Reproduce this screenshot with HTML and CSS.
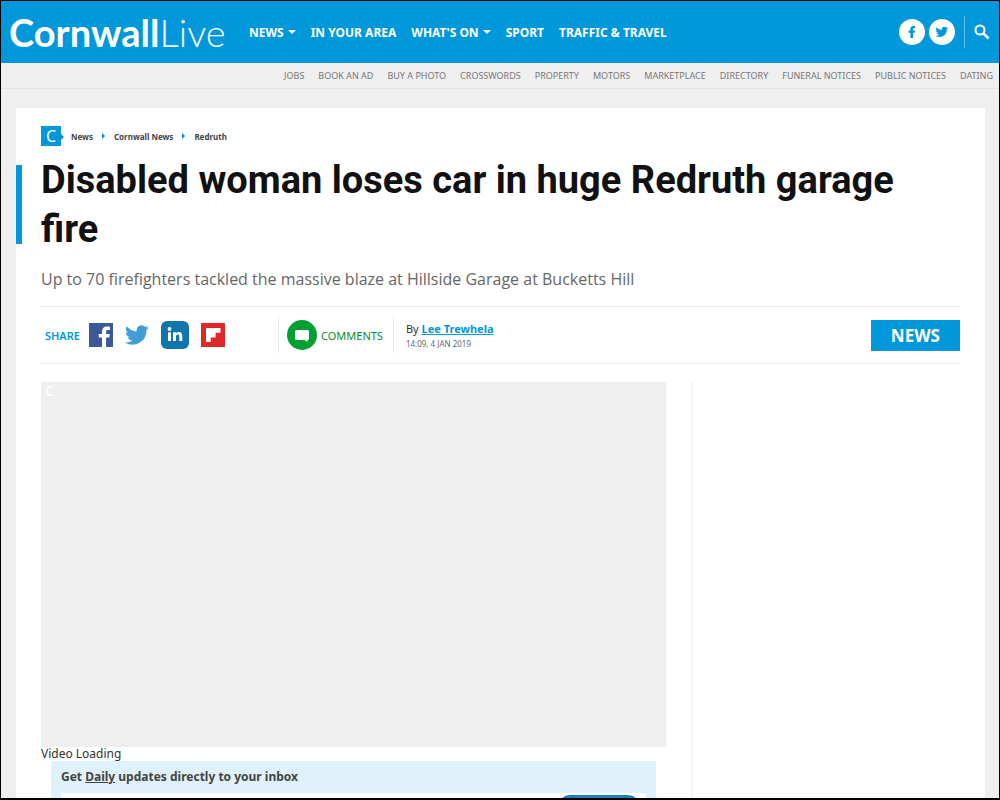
FILE: index.html
```html
<!DOCTYPE html>
<html lang="en">
<head>
<meta charset="utf-8">
<meta name="viewport" content="width=device-width, initial-scale=1">
<title>Disabled woman loses car in huge Redruth garage fire - Cornwall Live</title>
<link rel="stylesheet" href="styles.css">
</head>
<body>
<div class="frame">
  <header class="header">
    <a class="logo" href="#"><span class="logo-strong">Cornwall</span><span class="logo-light">Live</span></a>
    <nav class="main-nav" aria-label="Main">
      <a class="has-menu" href="#">NEWS</a>
      <a href="#">IN YOUR AREA</a>
      <a class="has-menu" href="#">WHAT'S ON</a>
      <a href="#">SPORT</a>
      <a href="#">TRAFFIC &amp; TRAVEL</a>
    </nav>
    <div class="header-tools">
      <a class="round" href="#" aria-label="Facebook"><svg width="26" height="26" viewBox="0 0 26 26"><circle cx="13" cy="13" r="13" fill="#fff"/><path d="M11.400 19v-5.200H9.500v-2.400h1.900V9.800C11.400 7.800 12.500 7 14.200 7h1.900v2.300h-1.200c-.7 0-.9.300-.9.900v1.200h2.100l-.3 2.400H14V19z" fill="#0098db"/></svg></a>
      <a class="round" href="#" aria-label="Twitter"><svg width="26" height="26" viewBox="0 0 26 26"><circle cx="13" cy="13" r="13" fill="#fff"/><g transform="translate(6.500 6.500) scale(.53)"><path d="M24 4.600a10 10 0 0 1-2.800.8 4.900 4.900 0 0 0 2.100-2.700 10 10 0 0 1-3.100 1.200 4.900 4.900 0 0 0-8.400 4.500A14 14 0 0 1 1.700 3.200a4.900 4.900 0 0 0 1.500 6.500 4.900 4.900 0 0 1-2.200-.6v.1a4.900 4.900 0 0 0 3.900 4.800 5 5 0 0 1-2.200.1 4.900 4.900 0 0 0 4.600 3.400A9.900 9.900 0 0 1 0 19.500 14 14 0 0 0 21.500 7.100 10 10 0 0 0 24 4.600z" fill="#0098db"/></g></svg></a>
      <button class="search" type="button" aria-label="Search"><svg width="18" height="18" viewBox="0 0 18 18" fill="none" stroke="#fff"><circle cx="7" cy="7" r="4.500" stroke-width="2"/><path d="M10.500 10.500l5 5" stroke-width="2.600"/></svg></button>
    </div>
  </header>
  <nav class="sub-nav" aria-label="Services">
    <a href="#">JOBS</a><a href="#">BOOK AN AD</a><a href="#">BUY A PHOTO</a><a href="#">CROSSWORDS</a><a href="#">PROPERTY</a><a href="#">MOTORS</a><a href="#">MARKETPLACE</a><a href="#">DIRECTORY</a><a href="#">FUNERAL NOTICES</a><a href="#">PUBLIC NOTICES</a><a href="#">DATING</a>
  </nav>
  <main class="article">
    <nav class="crumbs" aria-label="Breadcrumb">
      <a class="crumb-home" href="#">C</a>
      <a href="#">News</a><a class="next" href="#">Cornwall News</a><a class="next" href="#">Redruth</a>
    </nav>
    <h1 class="headline">Disabled woman loses car in huge Redruth garage fire</h1>
    <p class="lead">Up to 70 firefighters tackled the massive blaze at Hillside Garage at Bucketts Hill</p>
    <div class="meta">
      <div class="share">
        <span class="share-label">SHARE</span>
        <a href="#" aria-label="Share on Facebook"><svg width="24" height="24" viewBox="0 0 24 24"><path d="M0 0h24v24H0z" fill="#3b5998"/><path d="M13 24v-9.500h-3.300v-3.600H13V8.400C13 5.200 15 3.500 18 3.500c1.300 0 2.500.1 3 .2V7h-2c-1.600 0-1.900.8-1.900 1.900v2h3.700l-.5 3.600h-3.200V24z" fill="#fff"/></svg></a>
        <a href="#" aria-label="Share on Twitter"><svg width="24" height="24" viewBox="0 0 24 24"><path d="M24 4.600a10 10 0 0 1-2.800.8 4.900 4.900 0 0 0 2.100-2.700 10 10 0 0 1-3.100 1.200 4.900 4.900 0 0 0-8.400 4.500A14 14 0 0 1 1.700 3.200a4.900 4.900 0 0 0 1.500 6.500 4.900 4.900 0 0 1-2.200-.6v.1a4.900 4.900 0 0 0 3.900 4.800 5 5 0 0 1-2.200.1 4.900 4.900 0 0 0 4.600 3.400A9.900 9.900 0 0 1 0 19.500 14 14 0 0 0 21.500 7.100 10 10 0 0 0 24 4.600z" fill="#429cd6"/></svg></a>
        <a href="#" aria-label="Share on LinkedIn"><svg width="28" height="28" viewBox="0 0 28 28"><rect width="28" height="28" rx="6" fill="#0e76a8"/><circle cx="8.500" cy="8" r="1.900" fill="#fff"/><path d="M7 11.200h3V20H7zM12 11.200h2.900v1.300c.6-1 1.600-1.500 2.900-1.500 2.600 0 3.500 1.600 3.500 4.200V20h-3v-4.500c0-1.200-.3-2.100-1.500-2.100-1.300 0-1.800 1-1.800 2.200V20h-3z" fill="#fff"/></svg></a>
        <a href="#" aria-label="Share on Flipboard"><svg width="24" height="24" viewBox="0 0 24 24"><path d="M0 0h24v24H0z" fill="#e12828"/><path d="M5 5h14.500v4.800h-4.900v4.600H9.800V19H5z" fill="#fff"/></svg></a>
      </div>
      <a class="comments" href="#"><svg width="30" height="30" viewBox="0 0 30 30"><circle cx="15" cy="15" r="15" fill="#00a033"/><path d="M9.500 10h11a1.500 1.500 0 0 1 1.500 1.500v7a1.500 1.500 0 0 1-1.500 1.500v2l-3-2h-8A1.500 1.500 0 0 1 8 18.500v-7A1.500 1.500 0 0 1 9.500 10z" fill="#fff"/></svg><span>COMMENTS</span></a>
      <div class="byline">
        <div>By <a href="#">Lee Trewhela</a></div>
        <time datetime="2019-01-04T14:09">14:09, 4 JAN 2019</time>
      </div>
      <a class="tag" href="#">NEWS</a>
    </div>
    <div class="columns">
      <section class="content">
        <div class="video"><span>C</span></div>
        <p class="loading">Video Loading</p>
        <form class="signup">
          <label for="email">Get <u>Daily</u> updates directly to your inbox</label>
          <div class="signup-row"><input id="email" type="email"><button type="button" aria-label="Subscribe"></button></div>
        </form>
      </section>
      <aside class="side"></aside>
    </div>
  </main>
</div>
</body>
</html>
```
FILE: styles.css
```css
* { box-sizing: border-box; }
body {
  margin: 0;
  font-family: "Noto Sans", "Open Sans", sans-serif;
  color: #333;
}
a { color: inherit; text-decoration: none; }
svg { display: block; }
.frame {
  height: 100vh;
  overflow: hidden;
  border: 1px solid #000;
  border-bottom-width: 2px;
  background: #efefef;
}
.header {
  display: flex;
  align-items: center;
  height: 62px;
  padding: 0 8px;
  background: #0098db;
  color: #fff;
}
.logo {
  width: 240px;
  flex: none;
  font-family: "Lato", sans-serif;
  font-size: 38px;
  line-height: 56px;
  white-space: nowrap;
}
.logo-strong { font-weight: 700; }
.logo-light { font-weight: 300; }
.main-nav {
  display: flex;
  gap: 15px;
  font-size: 12px;
  font-weight: 700;
  white-space: nowrap;
}
.main-nav a { display: flex; align-items: center; gap: 4px; }
.has-menu::after {
  content: "";
  border: 4px solid transparent;
  border-top-color: #fff;
  border-bottom: 0;
}
.header-tools {
  display: flex;
  align-items: center;
  gap: 4px;
  margin-left: auto;
}
.search {
  display: flex;
  align-items: center;
  height: 32px;
  margin-left: 5px;
  padding: 0 0 0 8px;
  border: 0;
  border-left: 1px solid #5fc0ec;
  background: none;
}
.sub-nav {
  display: flex;
  justify-content: flex-end;
  gap: 14px;
  height: 26px;
  padding-right: 6px;
  border-bottom: 1px solid #e4e4e4;
  font-size: 9px;
  line-height: 25px;
  color: #777;
  white-space: nowrap;
}
.article {
  margin: 19px 14px 0 15px;
  padding: 18px 25px 0;
  background: #fff;
}
.crumbs {
  display: flex;
  align-items: center;
  gap: 9px;
  color: #444;
  font-size: 8px;
  font-weight: 700;
}
.crumb-home {
  position: relative;
  width: 20px;
  height: 20px;
  margin-right: 1px;
  background: #0098db;
  color: #fff;
  font-size: 16px;
  font-weight: 400;
  line-height: 20px;
  text-align: center;
}
.crumb-home::after {
  content: "";
  position: absolute;
  left: 100%;
  top: 8px;
  border: 3px solid transparent;
  border-left-color: #0098db;
  border-right: 0;
}
.next { display: flex; align-items: center; gap: 9px; }
.next::before {
  content: "";
  border: 3px solid transparent;
  border-left-color: #0098a8;
  border-right: 0;
}
.headline {
  position: relative;
  margin: 10px 0 0 -25px;
  padding-left: 25px;
  color: #111;
  font-family: "Roboto", sans-serif;
  font-size: 38px;
  font-weight: 700;
  line-height: 49px;
}
.headline::before {
  content: "";
  position: absolute;
  inset: 9px auto 10px 0;
  width: 6px;
  background: #0098db;
}
.lead {
  margin: 13px 0 15px;
  color: #666;
  font-family: "Open Sans", sans-serif;
  font-size: 16px;
  line-height: 24px;
}
.meta {
  display: flex;
  align-items: center;
  height: 58px;
  border: solid #e9e9e9;
  border-width: 1px 0;
}
.share { display: flex; align-items: center; gap: 12px; width: 237px; padding-left: 4px; }
.share-label { margin-right: -3px; color: #0098db; font-size: 11px; font-weight: 600; }
.comments {
  display: flex;
  align-items: center;
  gap: 4px;
  height: 36px;
  padding: 0 10px 0 8px;
  border: solid #e9e9e9;
  border-width: 0 1px;
  color: #00902f;
  font-size: 11px;
}
.byline { padding-left: 12px; font-size: 11px; line-height: 16px; }
.byline a { color: #0098db; font-weight: 700; text-decoration: underline; }
.byline time { display: block; color: #666; font-size: 8px; line-height: 13px; }
.tag {
  margin-left: auto;
  padding: 0 20px;
  background: #0098db;
  color: #fff;
  font-size: 17px;
  font-weight: 700;
  line-height: 31px;
}
.columns {
  display: grid;
  grid-template-columns: 625fr 269fr;
  gap: 25px;
  padding-top: 18px;
}
.video { aspect-ratio: 625 / 365; padding-left: 4px; background: #efefef; color: #fff; font-size: 14px; line-height: 18px; }
.loading { margin: 0; font-size: 12px; line-height: 14px; }
.signup { margin: 0 10px; padding: 7px 10px; background: #dff1fa; }
.signup label { display: block; font-size: 12px; font-weight: 700; line-height: 18px; color: #444; }
.signup-row { display: flex; margin-top: 7px; padding: 2px 6px 2px 0; background: #fff; }
.signup input { flex: 1; height: 36px; border: 0; background: #fff; }
.signup button { width: 82px; height: 36px; border: 0; border-radius: 12px; background: #1f7fb5; }
.side { border-left: 2px solid #f3f3f3; }
```
